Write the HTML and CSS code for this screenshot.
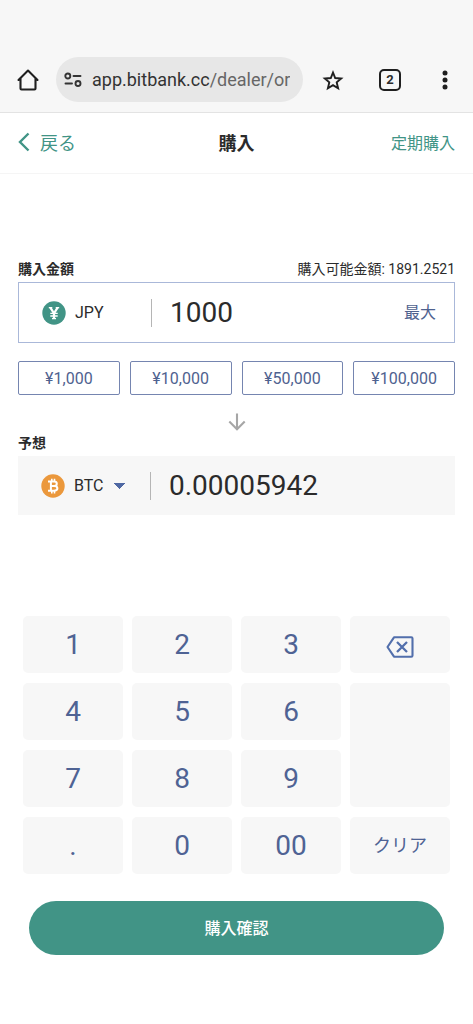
FILE: index.html
```html
<!DOCTYPE html>
<html lang="ja">
<head>
<meta charset="utf-8">
<meta name="viewport" content="width=device-width, initial-scale=1">
<title>購入</title>
<link rel="stylesheet" href="styles.css">
</head>
<body>
<div class="browser-bar">
  <button class="bar-icon" type="button" aria-label="ホーム">
    <svg width="24" height="24" viewBox="0 0 24 24" fill="none" stroke="#1f1f1f" stroke-width="2.1" stroke-linejoin="round" stroke-linecap="round"><path d="M2.500 12 12 2.500l9.500 9.500M4.500 10.500V20.500q0 1 1 1H18.500q1 0 1-1V10.500"/></svg>
  </button>
  <button class="address" type="button">
    <svg width="18" height="16" viewBox="0 0 18 16" fill="none" stroke="#333" stroke-width="1.900" stroke-linecap="round"><circle cx="3.800" cy="4" r="2.500"/><path d="M9.500 4H16.500M1.500 11.500H8"/><circle cx="14" cy="11.500" r="2.500"/></svg>
    <span class="url">app.bitbank.cc<span class="url-path">/dealer/or</span></span>
  </button>
  <button class="bar-icon" type="button" aria-label="ブックマーク">
    <svg width="24" height="24" viewBox="0 0 24 24" fill="none" stroke="#1f1f1f" stroke-width="1.900" stroke-linejoin="miter"><path d="M12 4.500 14.200 10l6 .5-4.500 3.900 1.400 5.800L12 17.100l-5.100 3.100 1.400-5.800L3.800 10.500 9.800 10z"/></svg>
  </button>
  <button class="bar-icon" type="button" aria-label="タブ 2"><span class="tab-count">2</span></button>
  <button class="bar-icon" type="button" aria-label="メニュー">
    <svg width="24" height="24" viewBox="0 0 24 24" fill="#1f1f1f"><circle cx="12" cy="5" r="2.500"/><circle cx="12" cy="12" r="2.500"/><circle cx="12" cy="19" r="2.500"/></svg>
  </button>
</div>

<header class="header">
  <a class="back" href="#back">
    <svg width="12" height="20" viewBox="0 0 12 20" fill="none" stroke="#419486" stroke-width="2.400"><path d="M10.500 1.500 2 10l8.500 8.500"/></svg>
    戻る
  </a>
  <h1 class="title">購入</h1>
  <a class="recurring" href="#recurring">定期購入</a>
</header>

<main class="form">
  <div class="label-row">
    <label class="label" for="amount">購入金額</label>
    <span class="available">購入可能金額: 1891.2521</span>
  </div>
  <div class="field field-pay">
    <div class="currency">
      <svg width="24" height="24" viewBox="0 0 24 24"><circle cx="12" cy="12" r="11.700" fill="#419486"/><g fill="none" stroke="#fff"><path d="M8.300 6.500 12 12.400 15.700 6.500M12 12v6" stroke-width="2.300"/><path d="M8.300 12.400h7.400M8.300 15h7.400" stroke-width="1.300"/><path d="M6.800 6.600h3.500M13.700 6.600h3.500M10 17.700h4" stroke-width="1.200"/></g></svg>
      <span>JPY</span>
    </div>
    <input class="value" id="amount" type="text" inputmode="decimal" value="1000">
    <button class="max" type="button">最大</button>
  </div>
  <div class="presets">
    <button class="preset" type="button">¥1,000</button>
    <button class="preset" type="button">¥10,000</button>
    <button class="preset" type="button">¥50,000</button>
    <button class="preset" type="button">¥100,000</button>
  </div>
  <svg class="down" width="18" height="18" viewBox="0 0 18 18" fill="none" stroke="#a6a6a6" stroke-width="2.100"><path d="M9 0.500V16.500M1.300 8.600 9 16.300l7.700-7.700"/></svg>
  <label class="label" for="estimate">予想</label>
  <div class="field field-get">
    <div class="currency">
      <svg width="24" height="24" viewBox="0 0 24 24"><circle cx="12" cy="12" r="11.700" fill="#eb983c"/><g fill="none" stroke="#fff" stroke-width="2"><path d="M7 7.500H13q2.800 0 2.800 2.200T13 11.900H9.800M13 11.900q3.400 0 3.400 2.400T13 16.700H7M9.900 7.500v9.200"/><path d="M10.800 4.800v3M13.500 4.800v3M10.800 16.500v3M13.500 16.500v3" stroke-width="1.600"/></g></svg>
      <select class="coin" aria-label="通貨"><option>BTC</option></select>
    </div>
    <input class="value" id="estimate" type="text" value="0.00005942" readonly>
  </div>
</main>

<div class="keypad">
  <button class="key" type="button">1</button>
  <button class="key" type="button">2</button>
  <button class="key" type="button">3</button>
  <button class="key" type="button" aria-label="削除">
    <svg class="erase" width="28" height="22" viewBox="0 0 28 22" fill="none" stroke="#526fac" stroke-width="2.100" stroke-linejoin="round"><path d="M8 1.300H25.300q1.200 0 1.200 1.200V19.500q0 1.200-1.200 1.200H8L1.500 11z"/><path d="M11 6 21 16M21 6 11 16" stroke-width="2.300"/></svg>
  </button>
  <button class="key" type="button">4</button>
  <button class="key" type="button">5</button>
  <button class="key" type="button">6</button>
  <div class="key key-blank"></div>
  <button class="key" type="button">7</button>
  <button class="key" type="button">8</button>
  <button class="key" type="button">9</button>
  <button class="key" type="button">.</button>
  <button class="key" type="button">0</button>
  <button class="key" type="button">00</button>
  <button class="key key-clear" type="button">クリア</button>
</div>

<div class="actions">
  <button class="submit" type="button">購入確認</button>
</div>
</body>
</html>
```
FILE: styles.css
```css
* { box-sizing: border-box; }

body {
  margin: 0;
  background: #fff;
  color: #2b2b2b;
  font-family: Roboto, "Noto Sans CJK JP", sans-serif;
  font-size: 16px;
}

button, input, select {
  margin: 0;
  padding: 0;
  border: 0;
  background: none;
  color: inherit;
  font: inherit;
}

a { text-decoration: none; }
svg { flex: none; display: block; }

.browser-bar {
  display: flex;
  align-items: center;
  gap: 16px;
  padding: 57px 16px 10px;
  background: #f7f7f7;
  border-bottom: 1px solid #e3e3e3;
}

.bar-icon {
  display: flex;
  flex: none;
  align-items: center;
  justify-content: center;
  width: 24px;
  height: 24px;
}

.address {
  display: flex;
  flex: 1;
  align-items: center;
  gap: 10px;
  min-width: 0;
  height: 45px;
  padding: 0 8px;
  border-radius: 24px;
  background: #e7e7e7;
}

.address + .bar-icon { margin: 0 17px 0 2px; }
.bar-icon:last-child { margin-left: 15px; }

.url {
  overflow: hidden;
  color: #333;
  font-size: 18px;
  line-height: 24px;
  white-space: nowrap;
}

.url-path { color: #666; }

.tab-count {
  width: 22px;
  height: 22px;
  border: 2px solid #1f1f1f;
  border-radius: 5px;
  font-size: 13px;
  font-weight: 700;
  line-height: 18px;
}

.header {
  display: grid;
  grid-template-columns: 1fr auto 1fr;
  align-items: center;
  height: 61px;
  padding: 0 18px 3px;
  border-bottom: 1px solid #f5f5f5;
}

.back, .recurring { color: #419486; }

.back {
  display: flex;
  align-items: center;
  gap: 10px;
  font-size: 18px;
}

.title {
  margin: 0;
  font-size: 18px;
  font-weight: 700;
}

.recurring { justify-self: end; }

.form {
  display: flex;
  flex-direction: column;
  padding: 84px 18px 0;
}

.label-row {
  display: flex;
  justify-content: space-between;
  margin-bottom: 2px;
}

.label, .available {
  font-size: 14px;
  line-height: 22px;
}

.label { font-weight: 700; }

.field {
  display: flex;
  align-items: center;
  padding: 0 18px 0 23px;
}

.field-pay {
  height: 61px;
  border: 1px solid #aab8d9;
}

.field-get {
  height: 59px;
  margin-top: 2px;
  background: #f7f7f7;
}

.currency {
  display: flex;
  flex: none;
  align-items: center;
  gap: 9px;
  width: 110px;
  height: 28px;
  border-right: 1px solid #b5b5b5;
}

.coin {
  width: 52px;
  appearance: none;
  background: linear-gradient(to bottom right, #4f68a3 50%, transparent 50%) right 0 center / 6px 6px no-repeat,
    linear-gradient(to bottom left, #4f68a3 50%, transparent 50%) right 6px center / 6px 6px no-repeat;
}

.value {
  flex: 1;
  min-width: 0;
  height: 40px;
  padding-left: 18px;
  font-size: 28px;
}

.max {
  flex: none;
  padding-bottom: 3px;
  color: #4f628f;
}

.presets {
  display: grid;
  grid-template-columns: repeat(4, 1fr);
  gap: 10px;
  margin-top: 18px;
}

.preset {
  height: 34px;
  border: 1px solid #7585b0;
  border-radius: 2px;
  color: #4f628f;
}

.down {
  align-self: center;
  margin: 18px 0 1px;
}

.keypad {
  display: grid;
  grid-template-columns: repeat(4, 1fr);
  grid-auto-rows: 57px;
  gap: 10px 9px;
  padding: 101px 23px 0;
}

.key {
  display: flex;
  align-items: center;
  justify-content: center;
  border-radius: 5px;
  background: #f7f7f7;
  color: #4f6394;
  font-size: 28px;
}

.key-blank { grid-row: span 2; }

.key-clear {
  padding-bottom: 4px;
  font-size: 18px;
}

.erase { margin-top: 4px; }

.actions { padding: 27px 29px; }

.submit {
  width: 100%;
  height: 54px;
  padding-bottom: 3px;
  border-radius: 27px;
  background: #419486;
  color: #fff;
  font-weight: 500;
}
```
